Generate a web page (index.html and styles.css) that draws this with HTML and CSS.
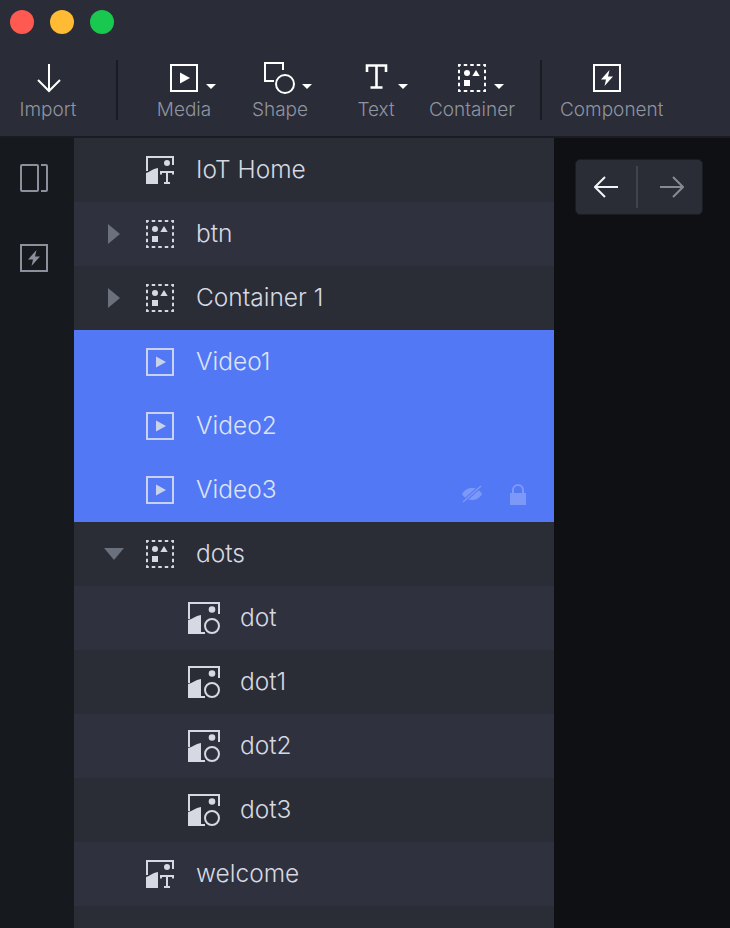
FILE: index.html
```html
<!DOCTYPE html>
<html lang="en">
<head>
<meta charset="utf-8">
<title>Layers</title>
<link rel="stylesheet" href="styles.css">
</head>
<body>
<svg class="defs" width="0" height="0">
  <symbol id="i-container" viewBox="0 0 28 28">
    <rect x="1" y="1" width="26" height="26" fill="none" stroke="currentColor" stroke-width="2" stroke-dasharray="3.500 3" stroke-dashoffset="1.750"/>
    <circle cx="9" cy="9" r="3" fill="currentColor"/>
    <path d="M14.300 12 L18 6 L21.700 12Z" fill="currentColor"/>
    <rect x="6" y="16" width="6" height="6" fill="currentColor"/>
  </symbol>
  <symbol id="i-video" viewBox="0 0 28 28">
    <rect x="1" y="1" width="26" height="26" fill="none" stroke="currentColor" stroke-width="2"/>
    <path d="M10 8.500 L20 14 L10 19.500Z" fill="currentColor"/>
  </symbol>
  <symbol id="i-bolt" viewBox="0 0 28 28">
    <rect x="1" y="1" width="26" height="26" fill="none" stroke="currentColor" stroke-width="2"/>
    <path d="M16.500 6 L8 15.500 H13 L11.500 22 L20 12.500 H15Z" fill="currentColor"/>
  </symbol>
  <symbol id="i-imgtext" viewBox="0 0 28 28">
    <path d="M1 15 V1 H27 V9" fill="none" stroke="currentColor" stroke-width="2"/>
    <path d="M0 28 V17 C4 16 6 13 12 12 V28Z" fill="currentColor"/>
    <circle cx="21" cy="7" r="3" fill="currentColor"/>
    <path d="M15 18.500 V16 H27 V18.500 M21 16 V27 M18 27 H24" fill="none" stroke="currentColor" stroke-width="2"/>
  </symbol>
  <symbol id="i-imgshape" viewBox="0 0 32 32">
    <path d="M1 17 V1 H31 V12" fill="none" stroke="currentColor" stroke-width="2"/>
    <path d="M0 32 V18 C5 17 7 14 13 13 V32Z" fill="currentColor"/>
    <path d="M13 31 H17" stroke="currentColor" stroke-width="2"/>
    <circle cx="24" cy="7.500" r="3.300" fill="currentColor"/>
    <circle cx="24" cy="24" r="7" fill="none" stroke="currentColor" stroke-width="2"/>
  </symbol>
  <symbol id="i-right" viewBox="0 0 12 20"><path d="M0 0 L12 10 L0 20Z" fill="currentColor"/></symbol>
  <symbol id="i-down" viewBox="0 0 20 12"><path d="M0 0 H20 L10 12Z" fill="currentColor"/></symbol>
  <symbol id="i-caret" viewBox="0 0 10 5"><path d="M0 0 H10 L5 5Z" fill="currentColor"/></symbol>
</svg>

<header class="titlebar">
  <span class="light light-red"></span>
  <span class="light light-yellow"></span>
  <span class="light light-green"></span>
</header>

<nav class="toolbar">
  <div class="tool tool-import">
    <svg class="tool-icon" width="28" height="28" viewBox="0 0 28 28"><path d="M15 0 V27 M4 16 L15 27 L26 16" fill="none" stroke="currentColor" stroke-width="2"/></svg>
    <span class="tool-label">Import</span>
  </div>
  <span class="tool-divider tool-divider-a"></span>
  <div class="tool">
    <span class="tool-glyph"><svg class="tool-icon" width="28" height="28"><use href="#i-video"/></svg><svg class="tool-caret" width="10" height="5"><use href="#i-caret"/></svg></span>
    <span class="tool-label">Media</span>
  </div>
  <div class="tool">
    <span class="tool-glyph"><svg class="tool-icon" width="28" height="28" viewBox="0 0 28 28"><path d="M8 17 H-1 V-1 H17 V6" fill="none" stroke="currentColor" stroke-width="2"/><circle cx="19" cy="20" r="9" fill="none" stroke="currentColor" stroke-width="2"/></svg><svg class="tool-caret" width="10" height="5"><use href="#i-caret"/></svg></span>
    <span class="tool-label">Shape</span>
  </div>
  <div class="tool">
    <span class="tool-glyph"><svg class="tool-icon" width="28" height="28" viewBox="0 0 28 28"><path d="M5 8 V1.500 H24 V8 M14.500 1.500 V23.500 M8.500 23.500 H20.500" fill="none" stroke="currentColor" stroke-width="2.600"/></svg><svg class="tool-caret" width="10" height="5"><use href="#i-caret"/></svg></span>
    <span class="tool-label">Text</span>
  </div>
  <div class="tool">
    <span class="tool-glyph"><svg class="tool-icon" width="28" height="28"><use href="#i-container"/></svg><svg class="tool-caret" width="10" height="5"><use href="#i-caret"/></svg></span>
    <span class="tool-label">Container</span>
  </div>
  <span class="tool-divider tool-divider-b"></span>
  <div class="tool tool-component">
    <svg class="tool-icon tool-icon-component" width="28" height="28"><use href="#i-bolt"/></svg>
    <span class="tool-label">Component</span>
  </div>
</nav>

<main class="workspace">
  <aside class="rail">
    <svg class="rail-icon" width="28" height="28" viewBox="0 0 28 28"><rect x="1" y="1" width="17" height="26" rx="1" fill="none" stroke="currentColor" stroke-width="2"/><path d="M21 1 H26 A1 1 0 0 1 27 2 V26 A1 1 0 0 1 26 27 H21" fill="none" stroke="currentColor" stroke-width="2"/></svg>
    <svg class="rail-icon" width="28" height="28"><use href="#i-bolt"/></svg>
  </aside>

  <section class="tree">
    <div class="row">
      <span class="toggle"></span><svg class="icon" width="28" height="28"><use href="#i-imgtext"/></svg><span class="name">IoT Home</span>
    </div>
    <div class="row row-alt">
      <span class="toggle"><svg class="toggle-right" width="12" height="20"><use href="#i-right"/></svg></span><svg class="icon" width="28" height="28"><use href="#i-container"/></svg><span class="name">btn</span>
    </div>
    <div class="row">
      <span class="toggle"><svg class="toggle-right" width="12" height="20"><use href="#i-right"/></svg></span><svg class="icon" width="28" height="28"><use href="#i-container"/></svg><span class="name">Container 1</span>
    </div>
    <div class="row row-selected">
      <span class="toggle"></span><svg class="icon" width="28" height="28"><use href="#i-video"/></svg><span class="name">Video1</span>
    </div>
    <div class="row row-selected">
      <span class="toggle"></span><svg class="icon" width="28" height="28"><use href="#i-video"/></svg><span class="name">Video2</span>
    </div>
    <div class="row row-selected">
      <span class="toggle"></span><svg class="icon" width="28" height="28"><use href="#i-video"/></svg><span class="name">Video3</span>
      <span class="row-actions">
        <svg class="eye" width="22" height="18" viewBox="0 0 22 18"><path d="M1 9 C4 4 8 3 11 3 C14 3 18 4 21 9 C18 14 14 15 11 15 C8 15 4 14 1 9Z" fill="currentColor"/><path d="M20 1 L2 17" stroke="#5278f6" stroke-width="3.500"/><path d="M20 1 L2 17" stroke="currentColor" stroke-width="1.500"/></svg>
        <svg class="lock" width="16" height="22" viewBox="0 0 16 22"><path d="M3 10 V7 A5 5 0 0 1 13 7 V10" fill="none" stroke="currentColor" stroke-width="2"/><rect x="0" y="10" width="16" height="12" fill="currentColor"/></svg>
      </span>
    </div>
    <div class="row">
      <span class="toggle"><svg class="toggle-down" width="20" height="12"><use href="#i-down"/></svg></span><svg class="icon" width="28" height="28"><use href="#i-container"/></svg><span class="name">dots</span>
    </div>
    <div class="row row-alt row-child">
      <svg class="icon" width="32" height="32"><use href="#i-imgshape"/></svg><span class="name">dot</span>
    </div>
    <div class="row row-child">
      <svg class="icon" width="32" height="32"><use href="#i-imgshape"/></svg><span class="name">dot1</span>
    </div>
    <div class="row row-alt row-child">
      <svg class="icon" width="32" height="32"><use href="#i-imgshape"/></svg><span class="name">dot2</span>
    </div>
    <div class="row row-child">
      <svg class="icon" width="32" height="32"><use href="#i-imgshape"/></svg><span class="name">dot3</span>
    </div>
    <div class="row row-alt">
      <span class="toggle"></span><svg class="icon" width="28" height="28"><use href="#i-imgtext"/></svg><span class="name">welcome</span>
    </div>
  </section>

  <aside class="stage">
    <div class="history">
      <svg class="history-back" width="24" height="22" viewBox="0 0 24 22"><path d="M24 11 H1 M11 1 L1 11 L11 21" fill="none" stroke="currentColor" stroke-width="2"/></svg>
      <span class="history-divider"></span>
      <svg class="history-forward" width="24" height="22" viewBox="0 0 24 22"><path d="M0 11 H23 M13 1 L23 11 L13 21" fill="none" stroke="currentColor" stroke-width="2"/></svg>
    </div>
  </aside>
</main>
</body>
</html>
```

FILE: styles.css
```css
* { box-sizing: border-box; }
html, body { margin: 0; padding: 0; height: 100%; overflow: hidden; }
body {
  width: 730px;
  height: 928px;
  display: flex;
  flex-direction: column;
  background: #2a2c37;
  font-family: Inter, Roboto, "Liberation Sans", sans-serif;
  font-weight: 300;
}
.defs { position: absolute; }

.titlebar {
  flex: none;
  height: 44px;
  display: flex;
  align-items: center;
  gap: 16px;
  padding: 0 10px;
}
.light { width: 24px; height: 24px; border-radius: 50%; }
.light-red { background: #ff5a52; }
.light-yellow { background: #ffbb33; }
.light-green { background: #19c84f; }

.toolbar {
  flex: none;
  height: 94px;
  display: flex;
  align-items: flex-start;
  border-bottom: 2px solid #1b1c22;
}
.tool {
  width: 96px;
  display: flex;
  flex-direction: column;
  align-items: center;
  color: #fff;
  padding-top: 20px;
}
.tool-component { width: 140px; align-items: flex-start; padding-left: 18px; }
.tool-glyph { position: relative; display: block; width: 28px; height: 28px; }
.tool-icon { display: block; overflow: visible; }
.tool-icon-component { margin-left: 33px; }
.tool-caret { position: absolute; left: 36px; top: 20px; }
.tool-label {
  margin-top: 6px;
  font-size: 19px;
  line-height: 24px;
  color: #8f94a1;
  white-space: nowrap;
}
.tool-divider {
  flex: none;
  width: 2px;
  height: 60px;
  margin-top: 16px;
  background: #1b1c22;
}
.tool-divider-a { margin-left: 20px; margin-right: 18px; }
.tool-divider-b { margin-left: 20px; }

.workspace { flex: 1; min-height: 0; display: flex; }
.rail {
  flex: none;
  width: 74px;
  display: flex;
  flex-direction: column;
  align-items: center;
  gap: 52px;
  padding: 26px 6px 0 0;
  background: #16191d;
  color: #8a909c;
}
.rail-icon { display: block; }

.tree { flex: none; width: 480px; background: #2a2d36; }
.row {
  height: 64px;
  display: flex;
  align-items: center;
  padding-left: 30px;
  background: #2a2d36;
  color: #d6d9e1;
}
.row-alt { background: #2f313e; }
.row-selected { background: #5278f6; color: #dde3f2; }
.row-child { padding-left: 114px; }
.toggle {
  flex: none;
  width: 42px;
  display: flex;
  align-items: center;
  color: #6a707c;
}
.toggle-right { margin-left: 4px; display: block; }
.toggle-down { display: block; }
.icon { flex: none; display: block; color: #d6d9e2; margin-right: 22px; }
.row-selected .icon { color: #c9d2ea; }
.row-child .icon { margin-right: 20px; }
.name { font-size: 24.5px; line-height: 30px; margin-bottom: 2px; white-space: nowrap; }
.row-actions {
  margin-left: auto;
  margin-right: 28px;
  display: flex;
  align-items: center;
  gap: 27px;
  color: #7c99f8;
  padding-top: 8px;
}
.eye, .lock { display: block; }

.stage { flex: 1; background: #0f1014; padding: 21px 0 0 21px; }
.history {
  width: 128px;
  height: 56px;
  display: flex;
  align-items: center;
  padding: 0 18px;
  background: #2a2d36;
  border: 1px solid #1a1c21;
  border-radius: 5px;
}
.history-back { color: #f2f3f6; display: block; }
.history-forward { color: #868a94; display: block; margin-left: 22px; }
.history-divider { width: 2px; height: 42px; margin-left: 18px; background: #41444f; }
```
